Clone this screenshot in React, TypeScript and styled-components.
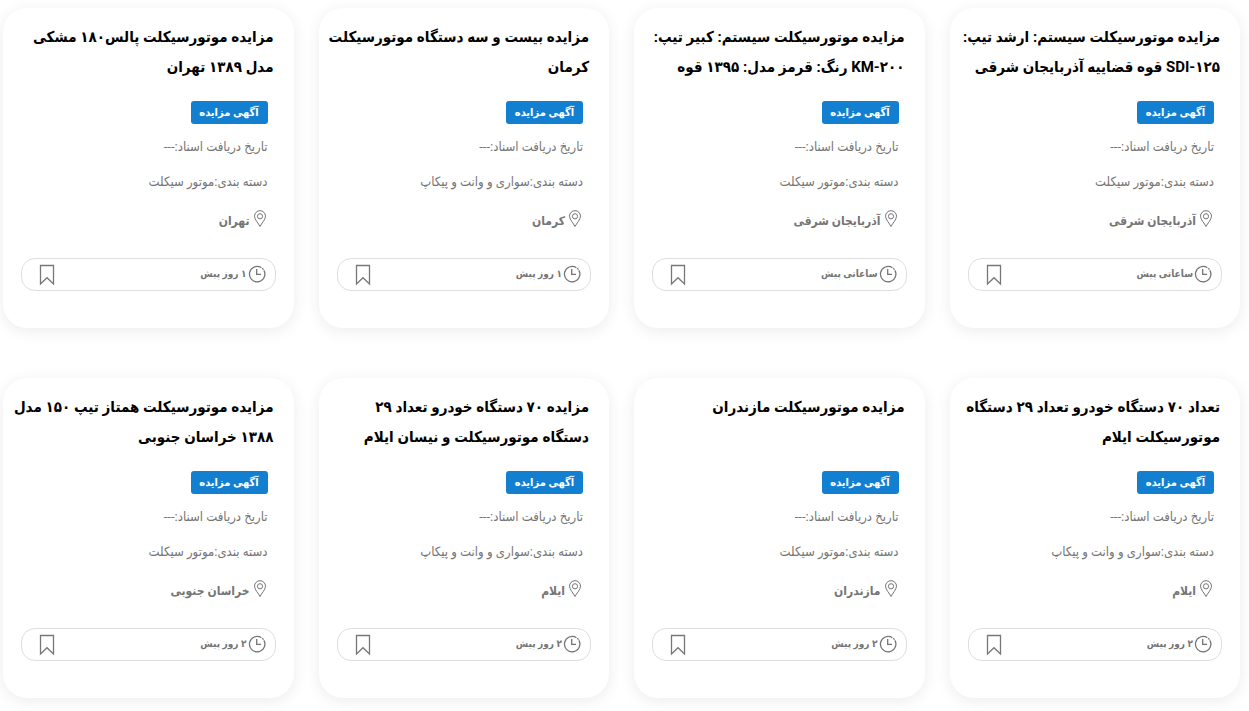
import React from "react";
import styled, { createGlobalStyle } from "styled-components";

const GlobalStyle = createGlobalStyle`
  * { box-sizing: border-box; }
  body {
    margin: 0;
    background: #fff;
    font-family: Roboto, "DejaVu Sans Condensed", "DejaVu Sans", sans-serif;
    overflow-x: hidden;
  }
`;

const Grid = styled.main`
  display: grid;
  grid-template-columns: repeat(4, minmax(0, 1fr));
  gap: 50px 25px;
  padding: 8px 9px 13px 3px;
`;

const Card = styled.article`
  min-height: 320px;
  padding: 14px 18px 37px;
  border-radius: 24px;
  background: #fff;
  box-shadow: 0 3px 16px rgba(0, 0, 0, 0.08);
`;

const Title = styled.h2`
  min-height: 60px;
  margin: 0 2px 0 -8px;
  color: #000;
  font-size: 15px;
  font-weight: 700;
  line-height: 30px;
  white-space: pre;
`;

const Details = styled.div`
  display: flex;
  flex-direction: column;
  align-items: flex-start;
  padding: 19px 8px 0;
  color: #757575;
`;

const Badge = styled.span`
  display: flex;
  align-items: center;
  justify-content: center;
  width: 77px;
  height: 23px;
  border-radius: 3px;
  background: #137fd1;
  color: #fff;
  font-size: 11px;
  font-weight: 700;
  white-space: nowrap;
`;

const Line = styled.p`
  margin: 11px 0 0;
  font-size: 13px;
  line-height: 24px;
  white-space: nowrap;
`;

const Place = styled.div`
  display: flex;
  align-items: center;
  gap: 3px;
  margin-top: 14px;
  padding-right: 1px;
  font-size: 12px;
  font-weight: 700;
  line-height: 26px;

  svg {
    margin-bottom: 4px;
  }
`;

const Footer = styled.footer`
  display: flex;
  align-items: center;
  justify-content: space-between;
  height: 33px;
  margin-top: 24px;
  padding: 0 9px 0 17px;
  border: 1px solid #dedede;
  border-radius: 14px;
  color: #757575;
`;

const Time = styled.span`
  display: flex;
  align-items: center;
  gap: 1px;
  padding-bottom: 2px;
  font-size: 10px;
  font-weight: 700;
`;

const SaveButton = styled.button`
  display: flex;
  padding: 0;
  border: 0;
  background: none;
  color: #777;
  cursor: pointer;
`;

const PinIcon = () => (
  <svg width="14" height="18" viewBox="0 0 14 18" fill="none" stroke="currentColor" aria-hidden="true">
    <path d="M7 16.5C5.5 13.4 1.5 9.5 1.5 6.2a5.5 5.5 0 0 1 11 0C12.5 9.5 8.5 13.4 7 16.5Z" />
    <circle cx="7" cy="6.3" r="2.6" />
  </svg>
);

const ClockIcon = () => (
  <svg width="18" height="18" viewBox="0 0 18 18" fill="none" stroke="currentColor" strokeWidth="1.3" aria-hidden="true">
    <path d="M15.9 5.400A7.700 7.700 0 1 1 13.400 2.700" />
    <path d="M14.200 3.300A7.700 7.700 0 0 1 15.500 4.700" />
    <path d="M8.700 4v5.400h4.300" />
  </svg>
);

const BookmarkIcon = () => (
  <svg width="16" height="22" viewBox="0 0 16 22" fill="none" stroke="currentColor" strokeWidth="1.3" aria-hidden="true">
    <path d="M1.5 1.5h13V20L8 13.7 1.5 20Z" />
  </svg>
);

interface Auction {
  title: string;
  category: string;
  place: string;
  time: string;
}

const MOTOR = "موتور سیکلت";
const CARS = "سواری و وانت و پیکاپ";

const auctions: Auction[] = [
  { title: "مزایده موتورسیکلت سیستم: ارشد تیپ:\nSDI-۱۲۵ قوه قضاییه آذربایجان شرقی", category: MOTOR, place: "آذربایجان شرقی", time: "ساعاتی پیش" },
  { title: "مزایده موتورسیکلت سیستم: کبیر تیپ:\nKM-۲۰۰ رنگ: قرمز مدل: ۱۳۹۵ قوه", category: MOTOR, place: "آذربایجان شرقی", time: "ساعاتی پیش" },
  { title: "مزایده بیست و سه دستگاه موتورسیکلت\nکرمان", category: CARS, place: "کرمان", time: "۱ روز پیش" },
  { title: "مزایده موتورسیکلت پالس۱۸۰ مشکی\nمدل ۱۳۸۹ تهران", category: MOTOR, place: "تهران", time: "۱ روز پیش" },
  { title: "تعداد ۷۰ دستگاه خودرو تعداد ۲۹ دستگاه\nموتورسیکلت ایلام", category: CARS, place: "ایلام", time: "۲ روز پیش" },
  { title: "مزایده موتورسیکلت مازندران", category: MOTOR, place: "مازندران", time: "۲ روز پیش" },
  { title: "مزایده ۷۰ دستگاه خودرو تعداد ۲۹\nدستگاه موتورسیکلت و نیسان ایلام", category: CARS, place: "ایلام", time: "۲ روز پیش" },
  { title: "مزایده موتورسیکلت همتاز تیپ ۱۵۰ مدل\n۱۳۸۸ خراسان جنوبی", category: MOTOR, place: "خراسان جنوبی", time: "۲ روز پیش" },
];

const AuctionCard = ({ title, category, place, time }: Auction) => (
  <Card>
    <Title>{title}</Title>
    <Details>
      <Badge>آگهی مزایده</Badge>
      <Line>تاریخ دریافت اسناد:---</Line>
      <Line>دسته بندی:{category}</Line>
      <Place>
        <PinIcon />
        <span>{place}</span>
      </Place>
    </Details>
    <Footer>
      <Time>
        <ClockIcon />
        <span>{time}</span>
      </Time>
      <SaveButton type="button" aria-label="ذخیره">
        <BookmarkIcon />
      </SaveButton>
    </Footer>
  </Card>
);

export default function App() {
  return (
    <>
      <GlobalStyle />
      <Grid dir="rtl" lang="fa">
        {auctions.map((auction) => (
          <AuctionCard key={auction.title} {...auction} />
        ))}
      </Grid>
    </>
  );
}
